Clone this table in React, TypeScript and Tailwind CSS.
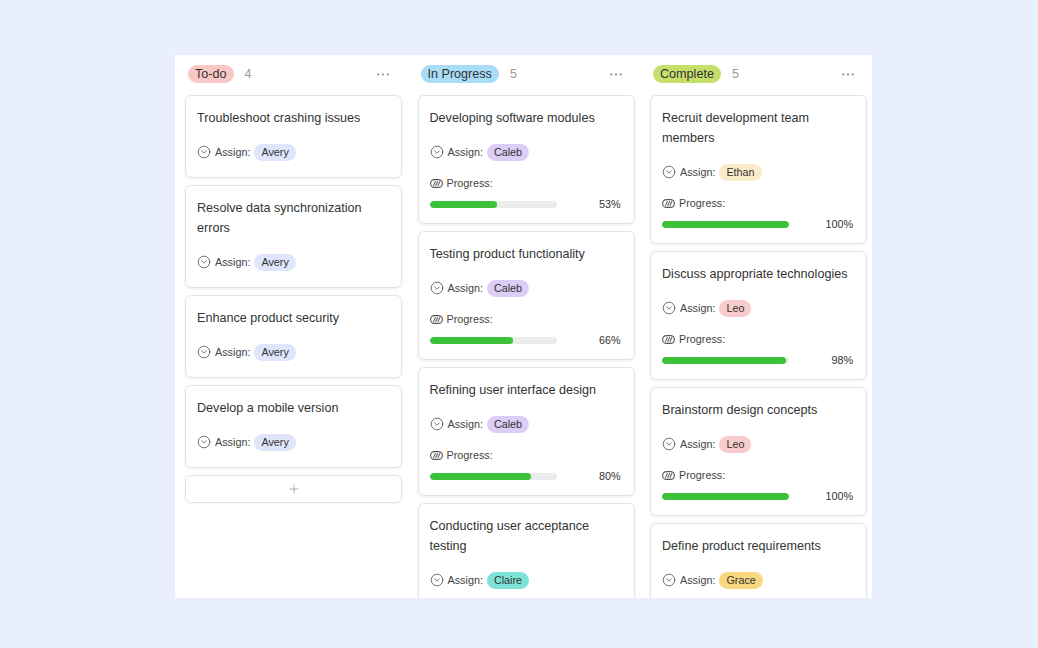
import React from "react";
import { CircleChevronDown, Plus } from "lucide-react";

type Task = { title: string; who: string; whoBg: string; progress?: number };

const todo: Task[] = [
  { title: "Troubleshoot crashing issues", who: "Avery", whoBg: "bg-[#dfe6fb]" },
  { title: "Resolve data synchronization errors", who: "Avery", whoBg: "bg-[#dfe6fb]" },
  { title: "Enhance product security", who: "Avery", whoBg: "bg-[#dfe6fb]" },
  { title: "Develop a mobile version", who: "Avery", whoBg: "bg-[#dfe6fb]" },
];

const inProgress: Task[] = [
  { title: "Developing software modules", who: "Caleb", whoBg: "bg-[#dccdf7]", progress: 53 },
  { title: "Testing product functionality", who: "Caleb", whoBg: "bg-[#dccdf7]", progress: 66 },
  { title: "Refining user interface design", who: "Caleb", whoBg: "bg-[#dccdf7]", progress: 80 },
  { title: "Conducting user acceptance testing", who: "Claire", whoBg: "bg-[#7de3d6]", progress: 40 },
];

const complete: Task[] = [
  { title: "Recruit development team members", who: "Ethan", whoBg: "bg-[#fbecc9]", progress: 100 },
  { title: "Discuss appropriate technologies", who: "Leo", whoBg: "bg-[#f8cccc]", progress: 98 },
  { title: "Brainstorm design concepts", who: "Leo", whoBg: "bg-[#f8cccc]", progress: 100 },
  { title: "Define product requirements", who: "Grace", whoBg: "bg-[#f8d77e]", progress: 100 },
];

function ProgressIcon() {
  return (
    <svg width="13" height="9" viewBox="0 0 13 9" fill="none" stroke="#555" strokeWidth="1.1">
      <rect x="0.6" y="0.6" width="11.8" height="7.8" rx="3.9" />
      <path d="M3.6 6.4 L5.2 2.6 M5.9 6.4 L7.5 2.6 M8.2 6.4 L9.8 2.6" strokeLinecap="round" />
    </svg>
  );
}

function Dots() {
  return (
    <svg width="12" height="3" viewBox="0 0 12 3" fill="#777">
      <circle cx="1.2" cy="1.5" r="0.9" />
      <circle cx="6" cy="1.5" r="0.9" />
      <circle cx="10.8" cy="1.5" r="0.9" />
    </svg>
  );
}

function Card({ t }: { t: Task }) {
  const hasProg = t.progress !== undefined;
  return (
    <div
      className={`w-[217px] shrink-0 rounded-[6px] border border-[#e4e4e4] bg-white px-[11px] pt-[12px] shadow-[0_1px_3px_rgba(0,0,0,0.07)] ${
        hasProg ? "pb-[9px]" : "pb-[16px]"
      }`}
    >
      <div className="text-[12.6px] leading-[20px] text-[#333]">{t.title}</div>
      <div className="mt-[15px] flex h-[18px] items-center text-[10.8px] text-[#444]">
        <CircleChevronDown size={14} strokeWidth={1.4} color="#555" />
        <span className="ml-[4px]">Assign:</span>
        <span className={`ml-[4px] flex h-[17px] items-center rounded-full px-[7px] text-[10.8px] text-[#333] ${t.whoBg}`}>
          {t.who}
        </span>
      </div>
      {hasProg && (
        <>
          <div className="mt-[14px] flex h-[16px] items-center text-[10.8px] text-[#444]">
            <ProgressIcon />
            <span className="ml-[4px]">Progress:</span>
          </div>
          <div className="mt-[3px] flex h-[20px] items-center justify-between">
            <div className="h-[7px] w-[127px] overflow-hidden rounded-full bg-[#ebebeb]">
              <div className="h-full rounded-full bg-[#3cc13b]" style={{ width: `${t.progress}%` }} />
            </div>
            <span className="mr-[2px] text-[10.8px] text-[#333]">{t.progress}%</span>
          </div>
        </>
      )}
    </div>
  );
}

function Column({
  name,
  pillBg,
  count,
  tasks,
  add,
}: {
  name: string;
  pillBg: string;
  count: number;
  tasks: Task[];
  add?: boolean;
}) {
  return (
    <div className="flex w-[217px] shrink-0 flex-col">
      <div className="flex h-[18px] items-center pl-[3px] pr-[13px]">
        <span className={`flex h-[18px] items-center rounded-full px-[7px] text-[12.6px] text-[#333] ${pillBg}`}>{name}</span>
        <span className="ml-[11px] text-[12.6px] text-[#999]">{count}</span>
        <span className="ml-auto flex items-center">
          <Dots />
        </span>
      </div>
      <div className="mt-[12px] flex flex-col gap-[7px]">
        {tasks.map((t) => (
          <Card key={t.title} t={t} />
        ))}
        {add && (
          <div className="flex h-[28px] items-center justify-center rounded-[6px] border border-[#e4e4e4] bg-white shadow-[0_1px_3px_rgba(0,0,0,0.05)]">
            <Plus size={14} strokeWidth={1.3} color="#999" />
          </div>
        )}
      </div>
    </div>
  );
}

export default function App() {
  return (
    <div className="h-[648px] w-[1038px] bg-[#e9effd] pl-[175px] pt-[55px] font-['Liberation_Sans',Arial,sans-serif]">
      <div className="flex h-[543px] w-[697px] gap-[15.5px] overflow-hidden bg-white pl-[10px] pt-[10px]">
        <Column name="To-do" pillBg="bg-[#f9c7c4]" count={4} tasks={todo} add />
        <Column name="In Progress" pillBg="bg-[#a9dcf6]" count={5} tasks={inProgress} />
        <Column name="Complete" pillBg="bg-[#c6df6b]" count={5} tasks={complete} />
      </div>
    </div>
  );
}
